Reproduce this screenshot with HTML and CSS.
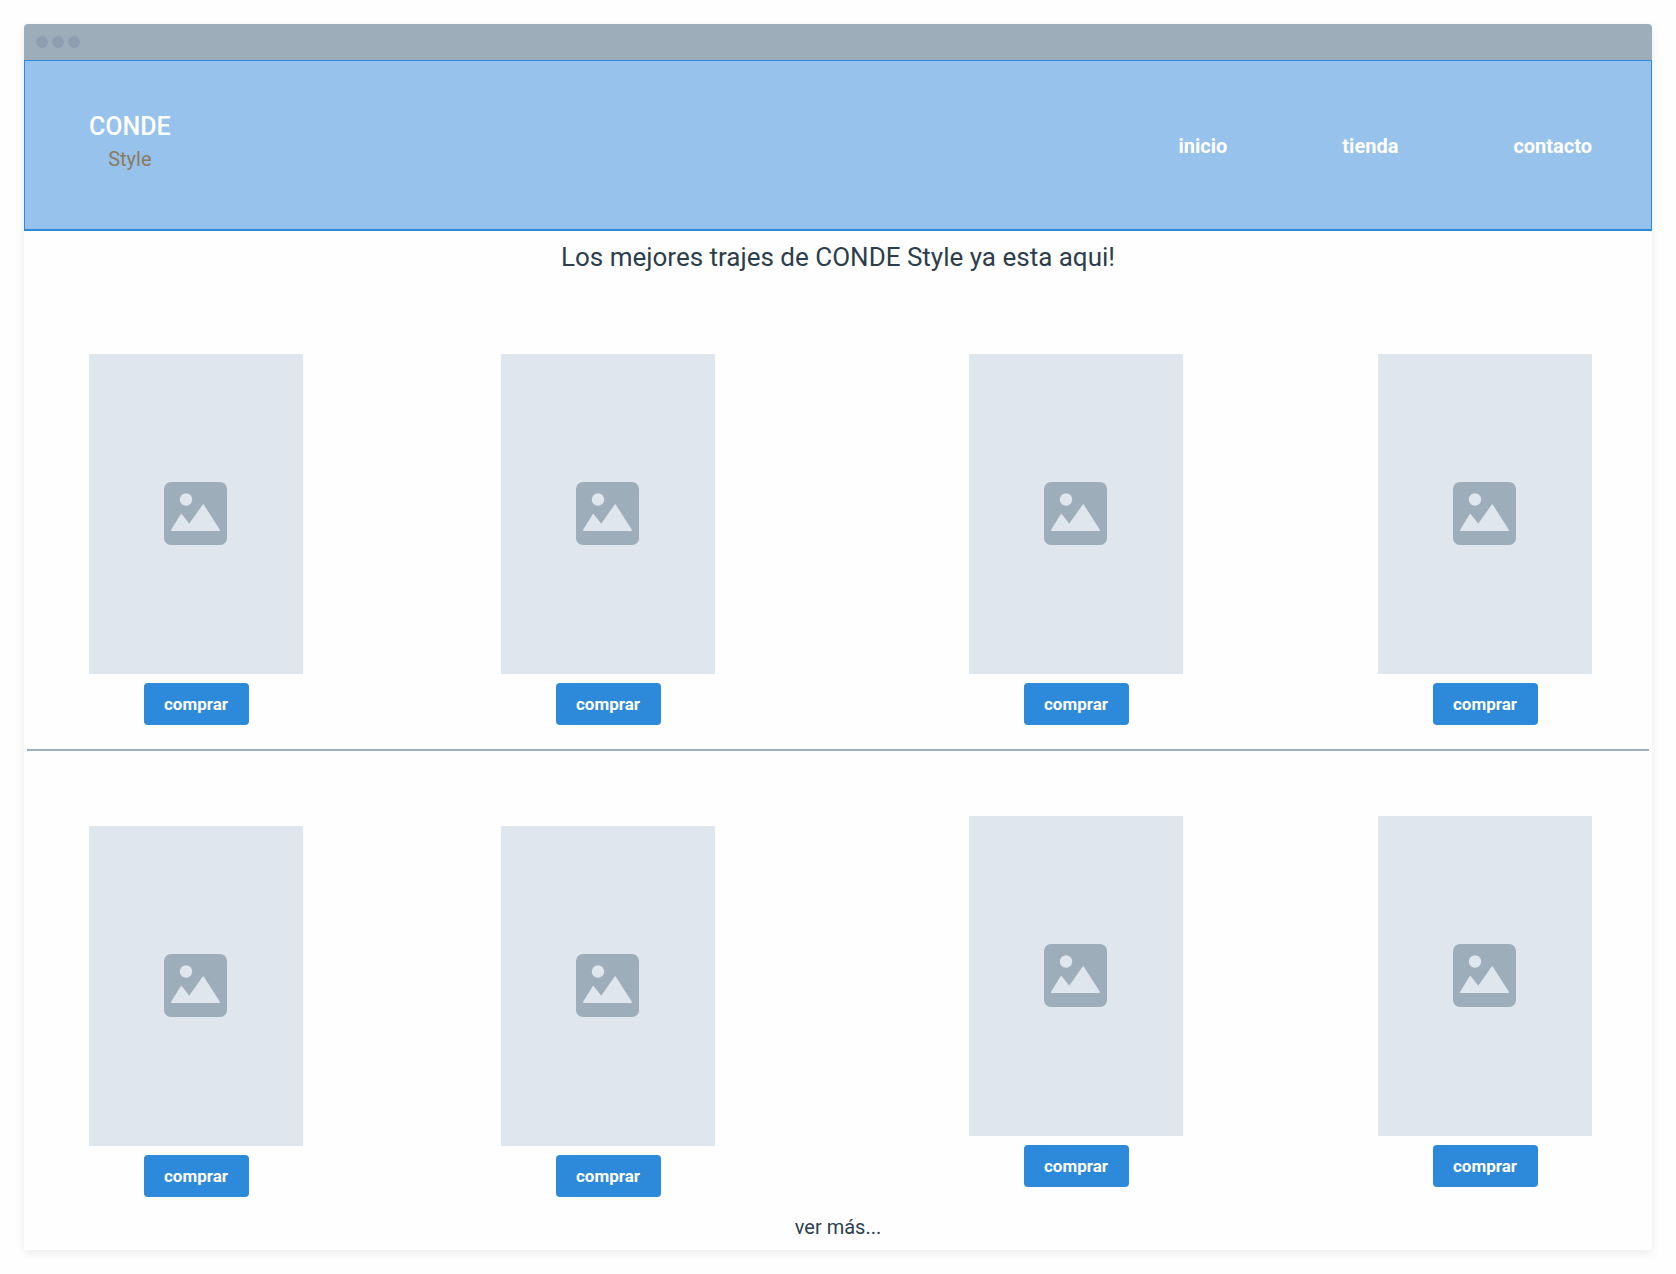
FILE: index.html
```html
<!DOCTYPE html>
<html lang="es">
<head>
<meta charset="utf-8">
<meta name="viewport" content="width=device-width, initial-scale=1">
<title>CONDE Style</title>
<link rel="stylesheet" href="styles.css">
</head>
<body>
<svg class="sprite" aria-hidden="true">
  <symbol id="picture" viewBox="0 0 63 63">
    <rect class="picture-frame" width="63" height="63" rx="7"/>
    <circle class="picture-shape" cx="22" cy="17.5" r="6.2"/>
    <path class="picture-shape picture-hills" d="M7.8 48.2 17.2 32.8 25.3 43 39.2 23.2 55.2 48.2Z"/>
  </symbol>
</svg>
<div class="window">
  <div class="window-bar"><span class="dot"></span><span class="dot"></span><span class="dot"></span></div>
  <header class="header">
    <div class="brand"><span class="brand-name">CONDE</span><span class="brand-sub">Style</span></div>
    <nav class="nav">
      <a href="#inicio">inicio</a>
      <a href="#tienda">tienda</a>
      <a href="#contacto">contacto</a>
    </nav>
  </header>
  <main>
    <h1 class="title">Los mejores trajes de CONDE Style ya esta aqui!</h1>
    <section class="products">
      <article class="card"><div class="photo"><svg class="icon"><use href="#picture"/></svg></div><button class="buy" type="button">comprar</button></article>
      <article class="card"><div class="photo"><svg class="icon"><use href="#picture"/></svg></div><button class="buy" type="button">comprar</button></article>
      <article class="card"><div class="photo"><svg class="icon"><use href="#picture"/></svg></div><button class="buy" type="button">comprar</button></article>
      <article class="card"><div class="photo"><svg class="icon"><use href="#picture"/></svg></div><button class="buy" type="button">comprar</button></article>
    </section>
    <hr class="divider">
    <section class="products">
      <article class="card card-low"><div class="photo"><svg class="icon"><use href="#picture"/></svg></div><button class="buy" type="button">comprar</button></article>
      <article class="card card-low"><div class="photo"><svg class="icon"><use href="#picture"/></svg></div><button class="buy" type="button">comprar</button></article>
      <article class="card"><div class="photo"><svg class="icon"><use href="#picture"/></svg></div><button class="buy" type="button">comprar</button></article>
      <article class="card"><div class="photo"><svg class="icon"><use href="#picture"/></svg></div><button class="buy" type="button">comprar</button></article>
    </section>
    <p class="more"><a href="#mas">ver más...</a></p>
  </main>
</div>
</body>
</html>
```
FILE: styles.css
```css
* {
  box-sizing: border-box;
}

body {
  margin: 0;
  padding: 24px;
  background: #fefefe;
  color: #2c3e4d;
  font-family: Roboto, "Liberation Sans", sans-serif;
}

a {
  color: inherit;
  text-decoration: none;
}

.sprite {
  display: none;
}

.window {
  border-radius: 4px 4px 2px 2px;
  background: #fefefe;
  box-shadow: 0 3px 10px rgba(0, 0, 0, 0.08);
}

.window-bar {
  display: flex;
  align-items: center;
  gap: 4px;
  height: 36px;
  padding: 0 12px;
  border-radius: 4px 4px 0 0;
  background: #9eadba;
}

.dot {
  width: 12px;
  height: 12px;
  border-radius: 50%;
  background: #8e9eae;
}

.header {
  display: flex;
  justify-content: space-between;
  align-items: flex-start;
  padding: 48px 59px 56px 64px;
  border: 1px solid #2d89da;
  border-bottom-width: 2px;
  background: #96c2eb;
}

.brand {
  display: flex;
  flex-direction: column;
  align-items: center;
}

.brand-name {
  color: #fff;
  font-size: 25px;
  font-weight: 500;
  line-height: 36px;
}

.brand-sub {
  color: #8c7b62;
  font-size: 20px;
  line-height: 28px;
}

.nav {
  display: flex;
  gap: 115px;
  padding-top: 25px;
  color: #fff;
  font-size: 20px;
  font-weight: 700;
  line-height: 24px;
}

.title {
  margin: 0;
  padding: 10px 0 81px;
  font-size: 26px;
  font-weight: 400;
  line-height: 32px;
  text-align: center;
}

.products {
  display: grid;
  grid-template-columns: 412fr 468fr 409fr 214px;
  padding: 0 60px 0 65px;
}

.card {
  display: flex;
  flex-direction: column;
  align-items: center;
  gap: 9px;
  width: 214px;
}

.card-low {
  margin-top: 10px;
}

.photo {
  display: grid;
  place-items: center;
  width: 100%;
  height: 320px;
  padding: 0 1px 1px 0;
  background: #dfe6ed;
}

.icon {
  width: 63px;
  height: 63px;
}

.picture-frame {
  fill: #9eadba;
}

.picture-shape {
  fill: #dfe6ed;
}

.picture-hills {
  stroke: #dfe6ed;
  stroke-width: 1.6;
  stroke-linejoin: round;
}

.buy {
  width: 105px;
  height: 42px;
  padding: 0;
  border: 0;
  border-radius: 4px;
  background: #2d89da;
  color: #fff;
  font-family: inherit;
  font-size: 17px;
  font-weight: 700;
}

.divider {
  height: 2px;
  margin: 24px 3px 65px;
  border: 0;
  background: #9eadba;
}

.more {
  margin: 0;
  padding: 18px 0 11px;
  font-size: 20px;
  line-height: 24px;
  text-align: center;
}
```
